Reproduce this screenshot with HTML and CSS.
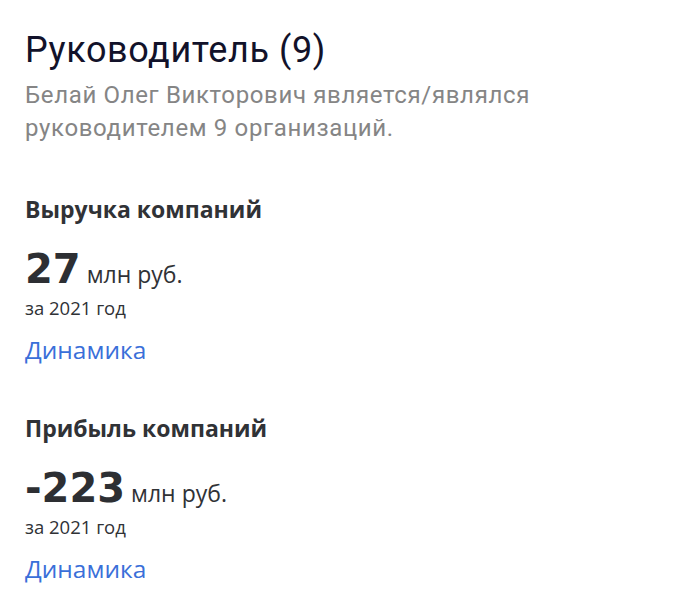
FILE: index.html
```html
<!DOCTYPE html>
<html lang="ru">
<head>
  <meta charset="UTF-8" />
  <meta name="viewport" content="width=device-width, initial-scale=1.0"/>
  <title>Руководитель</title>
  <link rel="stylesheet" href="styles.css">
</head>
<body>
  <h1 class="title">Руководитель (9)</h1>
  <p class="lead">Белай Олег Викторович является/являлся руководителем 9 организаций.</p>

  <section class="stat">
    <h2>Выручка компаний</h2>
    <div class="value"><b>27</b> млн руб.</div>
    <div class="period">за 2021 год</div>
    <a class="link" href="#">Динамика</a>
  </section>

  <section class="stat">
    <h2>Прибыль компаний</h2>
    <div class="value"><b>-223</b> млн руб.</div>
    <div class="period">за 2021 год</div>
    <a class="link" href="#">Динамика</a>
  </section>
</body>
</html>
```

FILE: styles.css
```css
body {
  margin: 0;
  padding: 27px 25px 0;
  background: #fff;
  font-family: Roboto, "Liberation Sans", sans-serif;
  color: #333;
}

.title {
  margin: 0;
  font-size: 36px;
  font-weight: 400;
  letter-spacing: 0.6px;
  line-height: 46px;
  color: #12122a;
}

.lead {
  margin: 6px 0 0;
  max-width: 540px;
  font-size: 24px;
  letter-spacing: 0.65px;
  line-height: 33px;
  color: #858585;
}

.stat {
  margin-top: 49px;
  font-family: "Open Sans", sans-serif;
  color: #303236;
}

.stat + .stat {
  margin-top: 48px;
}

.stat h2 {
  margin: 0;
  font-size: 23px;
  font-weight: 700;
  line-height: 30px;
}

.value {
  margin-top: 22px;
  font-size: 23px;
  line-height: 46px;
}

.value b {
  font-family: "DejaVu Sans", sans-serif;
  font-size: 40px;
  font-weight: 700;
  color: #2d2f33;
}

.period {
  font-size: 18.5px;
  line-height: 22px;
}

.link {
  display: block;
  width: fit-content;
  margin-top: 16px;
  font-size: 24.5px;
  line-height: 30px;
  color: #3a6fd9;
  text-decoration: none;
}
```
